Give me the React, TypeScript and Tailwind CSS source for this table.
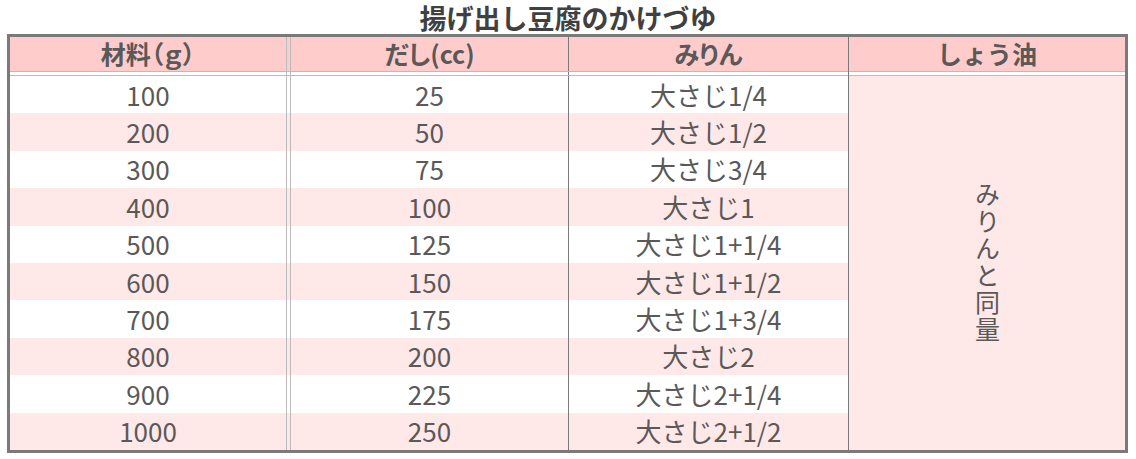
const rows = [
  ['100', '25', '大さじ1/4'],
  ['200', '50', '大さじ1/2'],
  ['300', '75', '大さじ3/4'],
  ['400', '100', '大さじ1'],
  ['500', '125', '大さじ1+1/4'],
  ['600', '150', '大さじ1+1/2'],
  ['700', '175', '大さじ1+3/4'],
  ['800', '200', '大さじ2'],
  ['900', '225', '大さじ2+1/4'],
  ['1000', '250', '大さじ2+1/2'],
];

function Row({
  cells,
  className,
}: {
  cells: [React.ReactNode, React.ReactNode, React.ReactNode];
  className: string;
}) {
  return (
    <div className={`flex ${className}`}>
      <div className="flex w-[277px] items-center justify-center border-r border-[#bbb]">{cells[0]}</div>
      <div className="w-[3px]" />
      <div className="flex w-[279px] items-center justify-center border-l border-r border-l-[#bbb] border-r-[#7a7a7a]">
        {cells[1]}
      </div>
      <div className="flex w-[279px] items-center justify-center">{cells[2]}</div>
    </div>
  );
}

export default function App() {
  return (
    <div className="h-[459px] w-[1136px] bg-white font-['Noto_Sans_CJK_JP',sans-serif] text-[#595959]">
      <div className="flex h-[34px] items-center justify-center pt-[2px]">
        <h1 className="text-[27px] font-bold leading-[30px] text-[#404040]">揚げ出し豆腐のかけづゆ</h1>
      </div>
      <div className="ml-[7px] flex w-[1121px] border-[3px] border-[#7a7a7a]">
        <div className="flex w-[838px] flex-col">
          <Row
            className="h-[35px] border-b border-[#bbb] bg-[#ffcccc] text-[25px] font-bold [font-feature-settings:'palt']"
            cells={['材料（ｇ）', 'だし(cc)', 'みりん']}
          />
          <Row className="h-[4px] border-b border-[#bbb] bg-white" cells={[null, null, null]} />
          {rows.map((r, i) => (
            <Row
              key={r[0]}
              className={`h-[37.4px] text-[26px] leading-none ${i % 2 === 1 ? 'bg-[#ffe8e8]' : 'bg-white'}`}
              cells={[r[0], r[1], r[2]]}
            />
          ))}
        </div>
        <div className="flex w-[277px] flex-col border-l border-[#7a7a7a]">
          <div className="flex h-[35px] items-center justify-center border-b border-[#bbb] bg-[#ffcccc] text-[25px] font-bold">
            しょう油
          </div>
          <div className="h-[4px] border-b border-[#bbb] bg-white" />
          <div className="flex flex-1 items-center justify-center bg-[#ffe8e8]">
            <span className="text-[25px] leading-none tracking-[2px] [text-orientation:upright] [writing-mode:vertical-rl]">
              みりんと同量
            </span>
          </div>
        </div>
      </div>
    </div>
  );
}
